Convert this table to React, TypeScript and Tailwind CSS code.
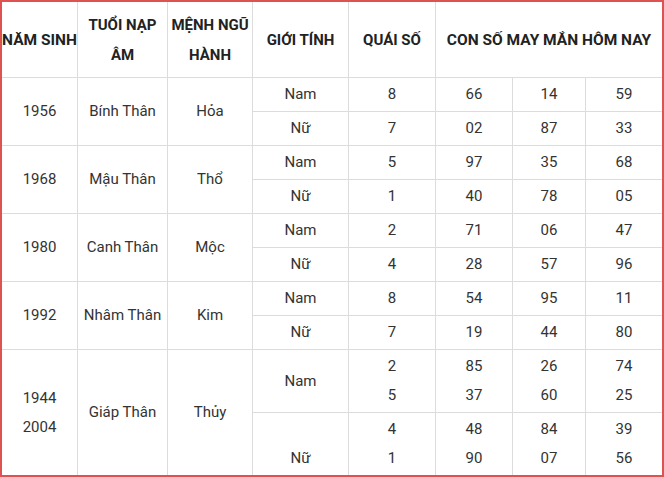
const rows = [
  {
    year: ["1956"],
    tuoi: "Bính Thân",
    menh: "Hỏa",
    nam: { q: ["8"], nums: [["66"], ["14"], ["59"]] },
    nu: { q: ["7"], nums: [["02"], ["87"], ["33"]] },
  },
  {
    year: ["1968"],
    tuoi: "Mậu Thân",
    menh: "Thổ",
    nam: { q: ["5"], nums: [["97"], ["35"], ["68"]] },
    nu: { q: ["1"], nums: [["40"], ["78"], ["05"]] },
  },
  {
    year: ["1980"],
    tuoi: "Canh Thân",
    menh: "Mộc",
    nam: { q: ["2"], nums: [["71"], ["06"], ["47"]] },
    nu: { q: ["4"], nums: [["28"], ["57"], ["96"]] },
  },
  {
    year: ["1992"],
    tuoi: "Nhâm Thân",
    menh: "Kim",
    nam: { q: ["8"], nums: [["54"], ["95"], ["11"]] },
    nu: { q: ["7"], nums: [["19"], ["44"], ["80"]] },
  },
  {
    year: ["1944", "2004"],
    tuoi: "Giáp Thân",
    menh: "Thủy",
    nam: { q: ["2", "5"], nums: [["85", "37"], ["26", "60"], ["74", "25"]] },
    nu: { q: ["4", "1"], nums: [["48", "90"], ["84", "07"], ["39", "56"]] },
  },
];

const cell = "border-[#dcdcdc] text-center align-middle p-0";

function Lines({ items }: { items: string[] }) {
  return (
    <>
      {items.map((t, i) => (
        <div key={i} className="leading-[29px]">
          {t}
        </div>
      ))}
    </>
  );
}

export default function App() {
  return (
    <div
      className="w-[664px] h-[477px] border-2 border-[#e05252] bg-white text-[15px] text-[#333] overflow-hidden"
      style={{ fontFamily: "Roboto, 'Liberation Sans', sans-serif" }}
    >
      <table className="table-fixed border-separate border-spacing-0 w-[660px]">
        <colgroup>
          <col className="w-[76px]" />
          <col className="w-[90px]" />
          <col className="w-[85px]" />
          <col className="w-[96px]" />
          <col className="w-[87px]" />
          <col className="w-[77px]" />
          <col className="w-[73px]" />
          <col className="w-[76px]" />
        </colgroup>
        <thead>
          <tr className="h-[76px] font-bold text-[#222]">
            <th className={`${cell} border-r border-b leading-[30px] whitespace-nowrap text-[15.5px]`}>
              NĂM SINH
            </th>
            <th className={`${cell} border-r border-b leading-[30px]`}>
              TUỔI NẠP
              <br />
              ÂM
            </th>
            <th className={`${cell} border-r border-b leading-[30px]`}>
              MỆNH NGŨ
              <br />
              HÀNH
            </th>
            <th className={`${cell} border-r border-b leading-[30px]`}>GIỚI TÍNH</th>
            <th className={`${cell} border-r border-b leading-[30px]`}>QUÁI SỐ</th>
            <th colSpan={3} className={`${cell} border-b leading-[30px] text-[15.5px]`}>
              CON SỐ MAY MẮN HÔM NAY
            </th>
          </tr>
        </thead>
        <tbody>
          {rows.map((r, gi) => {
            const last = gi === rows.length - 1;
            const namH = last ? "h-[63px]" : "h-[34px]";
            const nuH = last ? "h-[62px]" : "h-[34px]";
            const bb = last ? "" : "border-b";
            return [
              <tr key={`${gi}a`} className={namH}>
                <td rowSpan={2} className={`${cell} border-r ${bb}`}>
                  <Lines items={r.year} />
                </td>
                <td rowSpan={2} className={`${cell} border-r ${bb} whitespace-nowrap`}>
                  {r.tuoi}
                </td>
                <td rowSpan={2} className={`${cell} border-r ${bb}`}>
                  {r.menh}
                </td>
                <td className={`${cell} border-r border-b`}>Nam</td>
                <td className={`${cell} border-r border-b`}>
                  <Lines items={r.nam.q} />
                </td>
                {r.nam.nums.map((n, i) => (
                  <td key={i} className={`${cell} border-b ${i < 2 ? "border-r" : ""}`}>
                    <Lines items={n} />
                  </td>
                ))}
              </tr>,
              <tr key={`${gi}b`} className={nuH}>
                <td className={`${cell} border-r ${bb}`}>
                  {last ? <Lines items={["\u00a0", "Nữ"]} /> : "Nữ"}
                </td>
                <td className={`${cell} border-r ${bb}`}>
                  <Lines items={r.nu.q} />
                </td>
                {r.nu.nums.map((n, i) => (
                  <td key={i} className={`${cell} ${bb} ${i < 2 ? "border-r" : ""}`}>
                    <Lines items={n} />
                  </td>
                ))}
              </tr>,
            ];
          })}
        </tbody>
      </table>
    </div>
  );
}
